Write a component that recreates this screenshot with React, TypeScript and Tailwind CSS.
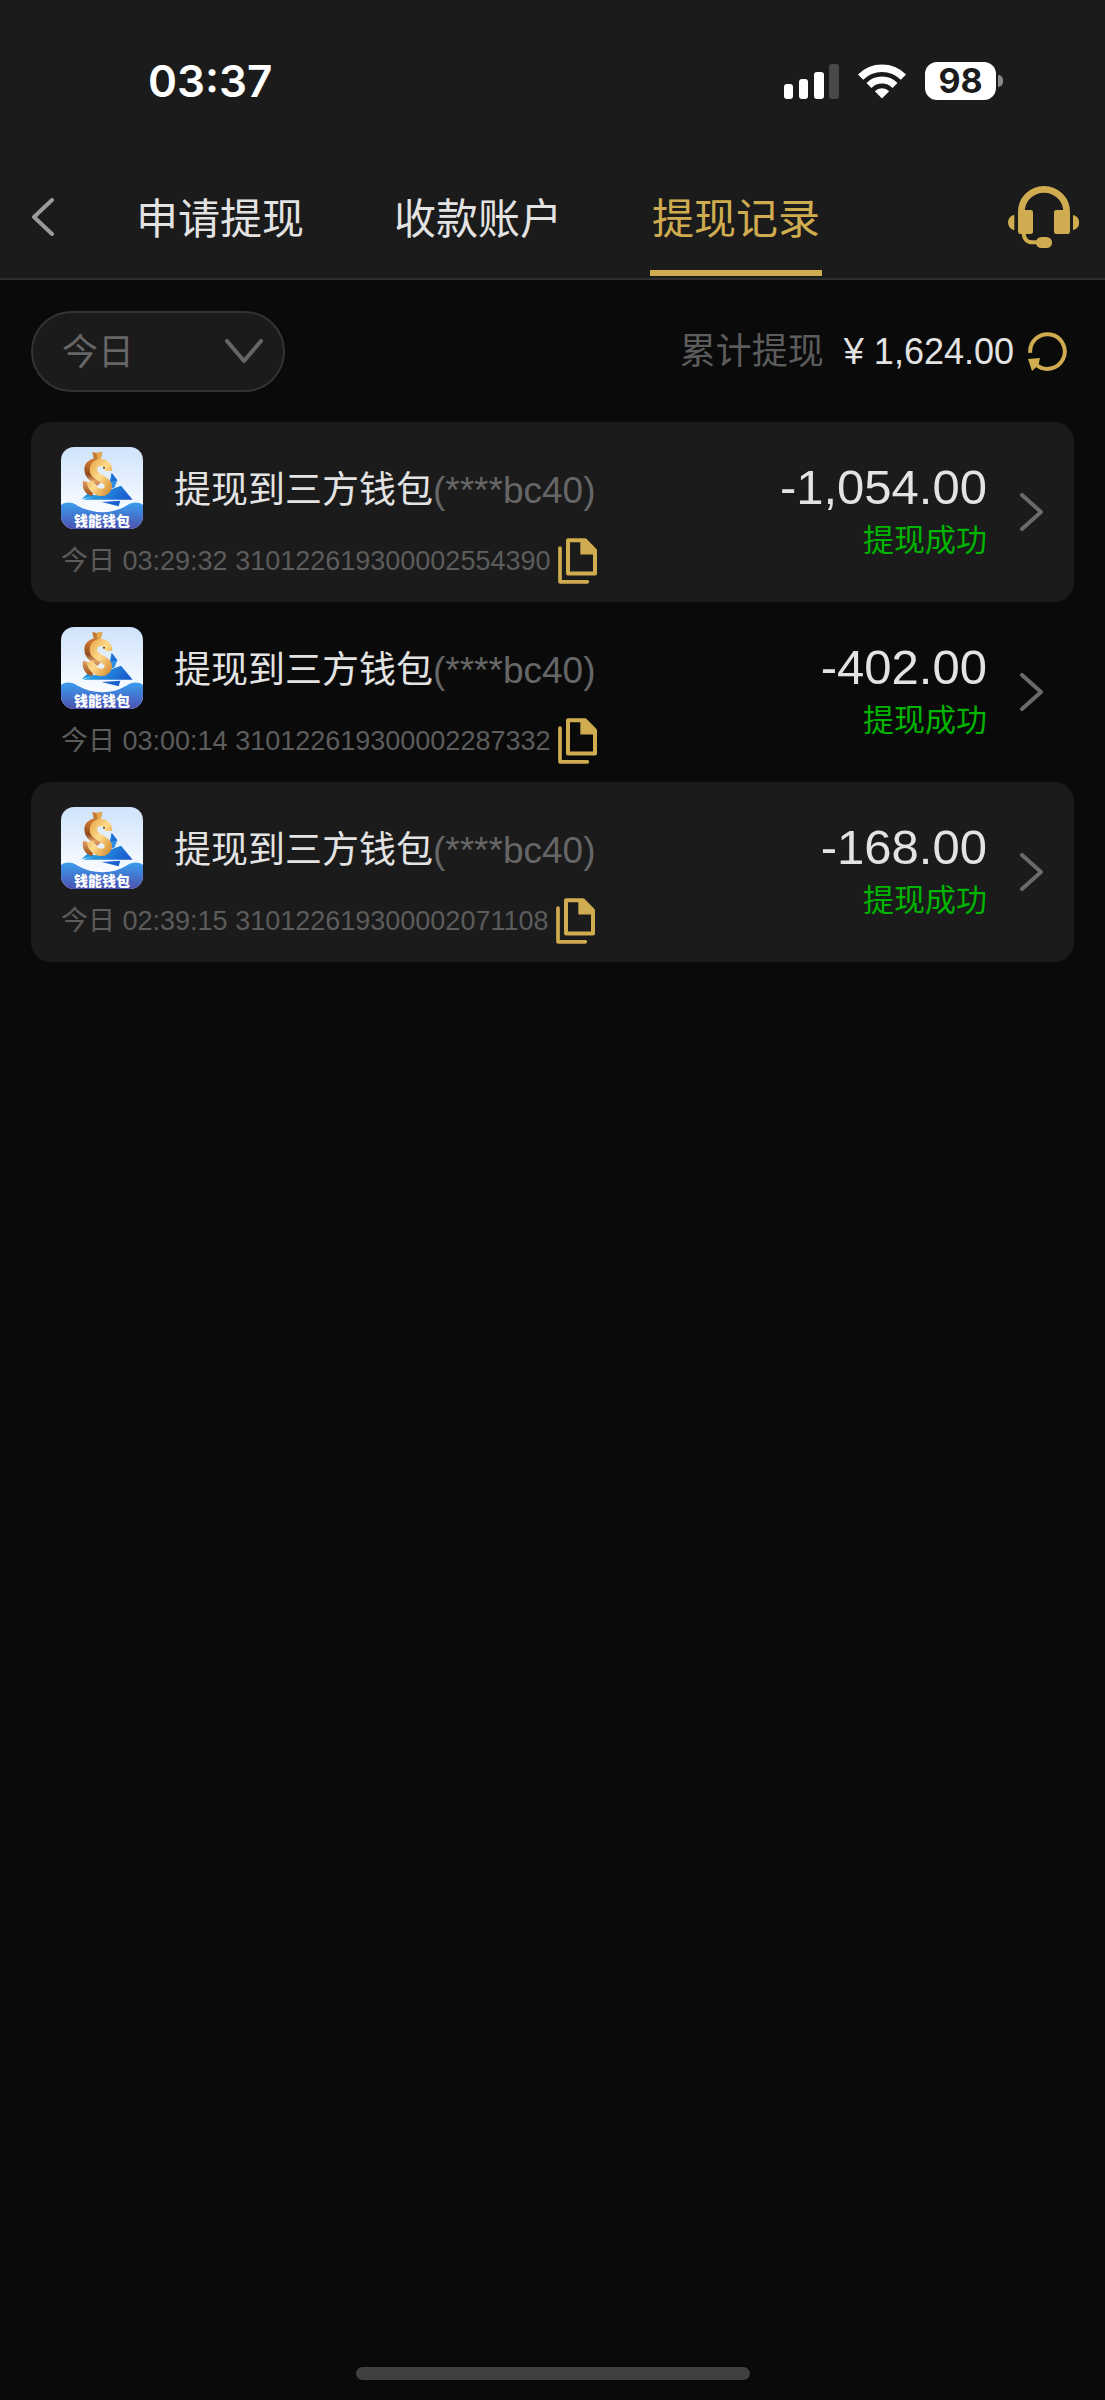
import { useState } from "react";

type WithdrawRecord = {
  id: string;
  time: string;
  amount: string;
};

const TABS = ["申请提现", "收款账户", "提现记录"];

const RECORDS: WithdrawRecord[] = [
  { id: "310122619300002554390", time: "03:29:32", amount: "-1,054.00" },
  { id: "310122619300002287332", time: "03:00:14", amount: "-402.00" },
  { id: "310122619300002071108", time: "02:39:15", amount: "-168.00" },
];

function StatusBar() {
  return (
    <div className="flex h-[162px] items-center justify-between pl-[148px] pr-[102px] text-white">
      <span className="font-['Inter',sans-serif] text-[44px] font-semibold leading-none">
        03:37
      </span>
      <div className="flex items-center">
        <svg className="h-[35px] w-[55px]" viewBox="0 0 55 35" fill="currentColor">
          <rect x="0" y="20" width="9" height="15" rx="3" />
          <rect x="15" y="15" width="9" height="20" rx="3" />
          <rect x="30" y="8" width="10" height="27" rx="3" />
          <rect x="45" y="0" width="10" height="35" rx="3" fill="#484848" />
        </svg>
        <svg
          className="ml-[19px] h-[35px] w-12"
          viewBox="0 0 48 35"
          fill="none"
          stroke="currentColor"
        >
          <path d="M2.6 13.1a30.2 30.2 0 0 1 42.8 0" strokeWidth="7.4" />
          <path d="M11 21.4a18.4 18.4 0 0 1 26 0" strokeWidth="7" />
          <path
            d="M24 34.5 16.8 27.3a10.2 10.2 0 0 1 14.4 0Z"
            fill="currentColor"
            stroke="none"
          />
        </svg>
        <div className="ml-[19px] flex h-[38px] w-[71px] items-center justify-center rounded-[12px] bg-white font-['Inter',sans-serif] text-[34px] font-bold leading-none text-[#1b1b1b]">
          98
        </div>
        <div className="ml-[2px] h-[12px] w-[5px] rounded-r-full bg-[#8a8a8a]" />
      </div>
    </div>
  );
}

function HeadsetIcon() {
  return (
    <svg className="h-[62px] w-[71px]" viewBox="0 0 213 186" fill="currentColor">
      <path
        d="M40 100V78a68 68 0 0 1 136 0v22"
        fill="none"
        stroke="currentColor"
        strokeWidth="20"
      />
      <rect x="30" y="72" width="45" height="72" rx="7" />
      <rect x="138" y="72" width="48" height="72" rx="7" />
      <path d="M19 87v45C-6 128-6 91 19 87ZM195 87v45c25-4 25-41 0-45Z" />
      <path
        d="M47 140c0 20 12 29 28 29h16"
        fill="none"
        stroke="currentColor"
        strokeWidth="12"
      />
      <rect x="84" y="153" width="48" height="33" rx="16" />
    </svg>
  );
}

function RefreshIcon() {
  return (
    <svg className="h-[39px] w-[39px]" viewBox="0 0 39 39" fill="none">
      <path
        d="M2.2 20.8A17.3 17.3 0 1 1 8 32.5"
        stroke="currentColor"
        strokeWidth="4"
      />
      <path d="M0 27 12 26 10.500 33 4 39Z" fill="currentColor" />
    </svg>
  );
}

function CopyIcon() {
  return (
    <svg className="h-[46px] w-[39px]" viewBox="0 0 117 137" fill="none">
      <path
        d="M6 30V131H88"
        stroke="currentColor"
        strokeWidth="11"
        strokeLinecap="round"
        strokeLinejoin="round"
      />
      <path
        d="M30 6H81L111 37V106H30Z"
        stroke="currentColor"
        strokeWidth="12"
        strokeLinejoin="round"
      />
      <path d="M67 4H82L114 36V49H67Z" fill="currentColor" />
    </svg>
  );
}

function WalletLogo() {
  return (
    <svg
      className="h-[82px] w-[82px] shrink-0 rounded-[13px]"
      viewBox="0 0 246 246"
      role="img"
      aria-label="钱能钱包"
    >
      <defs>
        <linearGradient id="sky" x1="0" y1="0" x2="0" y2="1">
          <stop offset="0" stopColor="#cfe3fb" />
          <stop offset="0.75" stopColor="#f7fbff" />
        </linearGradient>
        <linearGradient id="sea" x1="0" y1="0" x2="0" y2="1">
          <stop offset="0" stopColor="#3b9df0" />
          <stop offset="1" stopColor="#4c51b0" />
        </linearGradient>
        <linearGradient id="gold" x1="0" y1="0" x2="1" y2="1">
          <stop offset="0" stopColor="#e9a94c" />
          <stop offset="0.5" stopColor="#ffdb8c" />
          <stop offset="1" stopColor="#d9953c" />
        </linearGradient>
        <linearGradient id="bronze" x1="0" y1="0" x2="0" y2="1">
          <stop offset="0" stopColor="#c9752f" />
          <stop offset="0.4" stopColor="#8f4a20" />
          <stop offset="0.6" stopColor="#e0a066" />
          <stop offset="1" stopColor="#a85c2a" />
        </linearGradient>
        <linearGradient id="plane" x1="0" y1="0.4" x2="1" y2="0.6">
          <stop offset="0" stopColor="#2bb0ea" />
          <stop offset="1" stopColor="#1a58cc" />
        </linearGradient>
      </defs>
      <rect width="246" height="246" fill="url(#sky)" />
      <path d="M152 78 169 100 160 122 140 126Z" fill="#2f8fe2" />
      <path d="M152 78 169 100 150 104Z" fill="#1c6fd0" />
      <path d="M62 156 82 138 104 146Z" fill="#2196e0" />
      <path d="M65 158 180 116 215 158Z" fill="url(#plane)" />
      <path d="M122 165 178 161 173 178Z" fill="#1a62d0" />
      <path
        d="M116 50C98 40 80 48 80 68c0 24 22 28 36 42M76 104c-4 16 4 30 20 34"
        fill="none"
        stroke="url(#bronze)"
        strokeWidth="20"
      />
      <path d="M94 14 106 18 124 15 119 36 98 36Z" fill="#c47a34" />
      <path d="M106 18 124 15 119 36 110 36Z" fill="#e8a850" />
      <path
        d="M143 72C143 38 98 38 97 68c0 26 45 26 45 50-2 26-46 26-55-14"
        fill="none"
        stroke="url(#gold)"
        strokeWidth="22"
      />
      <circle cx="129" cy="62" r="3" fill="#5b3a1a" />
      <path
        d="M0 174C14 164 32 164 50 176 96 202 154 202 196 176 214 164 232 164 246 174V246H0Z"
        fill="url(#sea)"
      />
      <text
        x="123"
        y="236"
        textAnchor="middle"
        fill="#ffffff"
        className="font-['Noto_Sans_CJK_SC',sans-serif] text-[42px] font-black"
      >
        钱能钱包
      </text>
    </svg>
  );
}

function RecordItem({ record }: { record: WithdrawRecord }) {
  return (
    <li className="flex items-center rounded-[20px] pl-[30px] pr-[31px] odd:bg-[#1b1b1b]">
      <div className="flex-1 pb-[18px] pt-[25px]">
        <div className="flex items-center gap-[31px]">
          <WalletLogo />
          <h2 className="whitespace-nowrap pt-[6px] text-[37px] leading-[54px] text-[#e3e3e3]">
            提现到三方钱包<span className="text-[#666666]">(****bc40)</span>
          </h2>
        </div>
        <div className="mt-[9px] flex items-center gap-2 text-[27px] leading-none text-[#5c5c5c]">
          <p className="whitespace-nowrap">
            今日 {record.time} {record.id}
          </p>
          <button
            type="button"
            aria-label="复制订单号"
            className="text-[#d0ac50]"
            onClick={() => navigator.clipboard?.writeText(record.id)}
          >
            <CopyIcon />
          </button>
        </div>
      </div>
      <div className="pt-[3px] text-right">
        <p className="text-[49px] leading-[52px] text-[#e3e3e3]">{record.amount}</p>
        <p className="mt-[2px] text-[31px] leading-[52px] text-[#00b400]">提现成功</p>
      </div>
      <button type="button" aria-label="查看详情" className="ml-[33px] text-[#6a6a6a]">
        <svg className="h-[38px] w-[23px]" viewBox="0 0 23 38" fill="none">
          <path
            d="M2 2 21 19 2 36"
            stroke="currentColor"
            strokeWidth="4"
            strokeLinecap="round"
            strokeLinejoin="round"
          />
        </svg>
      </button>
    </li>
  );
}

export default function App() {
  const [tab, setTab] = useState("提现记录");
  const [range, setRange] = useState("今日");

  return (
    <div className="flex min-h-screen flex-col bg-[#0a0a0a] font-['Liberation_Sans','Noto_Sans_CJK_SC',sans-serif]">
      <header className="border-b-2 border-[#2e2e2e] bg-[#1b1b1b]">
        <StatusBar />
        <nav className="flex items-start pb-[2px] pl-8 pr-[26px]">
          <button
            type="button"
            aria-label="返回"
            className="flex h-[110px] items-center text-[#9a9a9a]"
          >
            <svg className="h-[38px] w-[22px]" viewBox="0 0 22 38" fill="none">
              <path
                d="M20 2 2 19 20 36"
                stroke="currentColor"
                strokeWidth="4"
                strokeLinecap="round"
                strokeLinejoin="round"
              />
            </svg>
          </button>
          <div className="ml-20 flex gap-[86px]">
            {TABS.map((name) => (
              <button
                key={name}
                type="button"
                onClick={() => setTab(name)}
                className={`h-[114px] whitespace-nowrap border-b-[6px] px-[2px] pt-[6px] text-[42px] ${
                  name === tab
                    ? "border-[#d0ac50] text-[#d0ac50]"
                    : "border-transparent text-[#e3e3e3]"
                }`}
              >
                {name}
              </button>
            ))}
          </div>
          <button
            type="button"
            aria-label="客服"
            className="ml-auto flex h-[110px] items-center text-[#d0ac50]"
          >
            <HeadsetIcon />
          </button>
        </nav>
      </header>

      <main className="px-[31px] pt-[31px]">
        <div className="flex items-center justify-between pr-[7px]">
          <div className="relative">
            <select
              aria-label="日期范围"
              value={range}
              onChange={(e) => setRange(e.target.value)}
              className="h-[81px] w-[254px] appearance-none rounded-full border-2 border-[#333333] bg-[#1b1b1b] pl-[29px] pt-[2px] text-[36px] text-[#666666] outline-none"
            >
              <option>今日</option>
              <option>昨日</option>
              <option>近7日</option>
            </select>
            <svg
              className="pointer-events-none absolute right-[22px] top-[28px] h-[25px] w-[38px] text-[#666666]"
              viewBox="0 0 38 25"
              fill="none"
            >
              <path
                d="M2 2 19 22 36 2"
                stroke="currentColor"
                strokeWidth="4"
                strokeLinecap="round"
                strokeLinejoin="round"
              />
            </svg>
          </div>
          <div className="flex items-center text-[36px] leading-[54px]">
            <span className="text-[#5c5c5c]">累计提现</span>
            <span className="ml-5 text-[#e3e3e3]">¥ 1,624.00</span>
            <button type="button" aria-label="刷新" className="ml-[14px] text-[#d0ac50]">
              <RefreshIcon />
            </button>
          </div>
        </div>

        <ul className="mt-[30px]">
          {RECORDS.map((record) => (
            <RecordItem key={record.id} record={record} />
          ))}
        </ul>
      </main>

      <div className="mx-auto mb-5 mt-auto h-[13px] w-[394px] rounded-full bg-[#404040]" />
    </div>
  );
}
